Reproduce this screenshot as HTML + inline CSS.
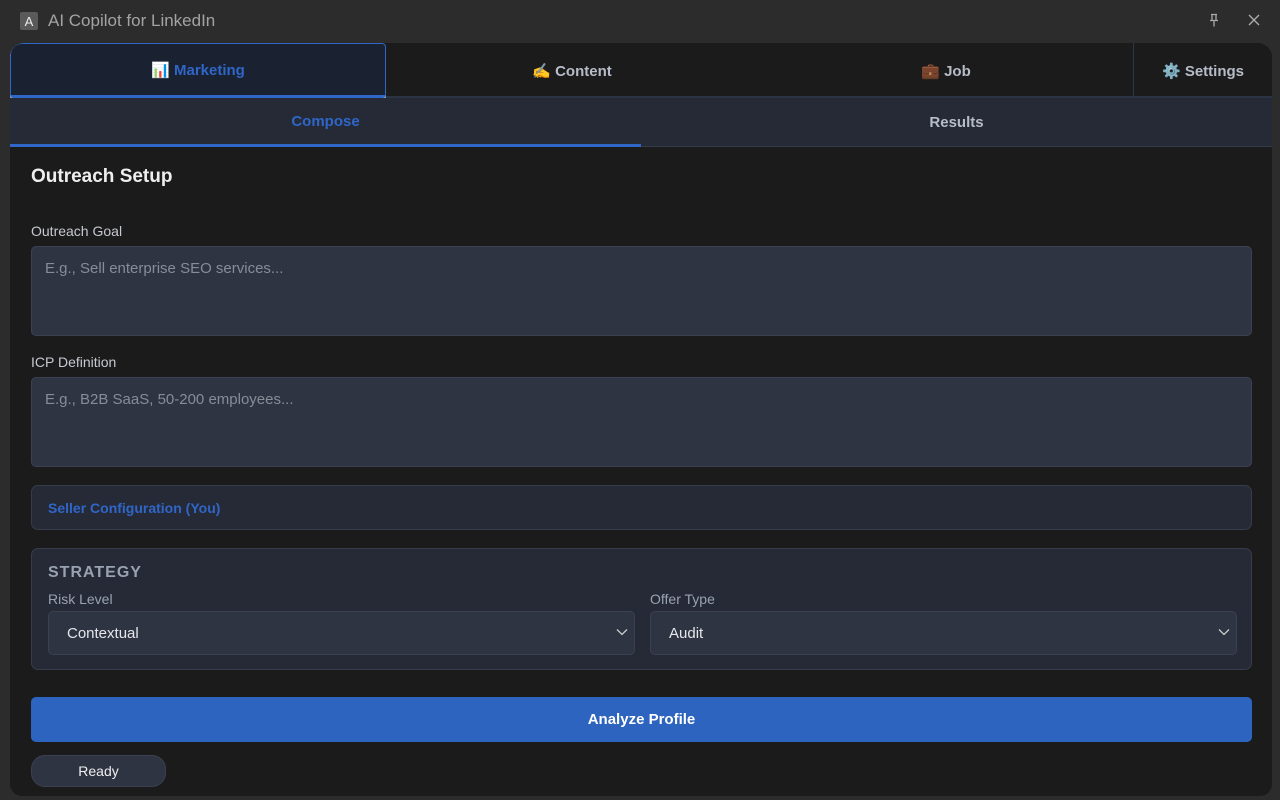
<!DOCTYPE html>
<html><head><style>
*{box-sizing:border-box;margin:0;padding:0}
body{width:1280px;height:800px;background:#2c2c2c;font-family:"Liberation Sans",sans-serif;position:relative;overflow:hidden;color:#e5e7eb}
.title{position:absolute;left:20px;top:11px;display:flex;align-items:center;gap:10px;color:#a3a3a3;font-size:17px}
.logo{width:18px;height:18px;background:#5a5a5a;color:#eee;font-size:13px;display:flex;align-items:center;justify-content:center;border-radius:2px}
.panel{position:absolute;left:10px;top:43px;width:1262px;height:753px;background:#1b1b1b;border-radius:14px 14px 12px 12px;overflow:hidden}
.tabs{position:absolute;left:0;top:0;width:1262px;height:55px;border-bottom:2px solid #2b3445}
.tab{position:absolute;top:0;height:55px;display:flex;align-items:center;justify-content:center;font-weight:bold;font-size:15px;color:#b6bcc8}
.tab.act{left:0;width:376px;background:#1a2130;border:1px solid #2f66c8;border-bottom:3px solid #2f66c8;border-radius:12px 4px 3px 3px;color:#2f66c8;box-shadow:0 1px 0 #ddd}
.sub{position:absolute;left:0;top:55px;width:1262px;height:49px;background:#252a36;border-bottom:1px solid #343c4c}
.sub div{position:absolute;top:0;height:49px;display:flex;align-items:center;justify-content:center;width:631px;font-weight:bold;font-size:15px}
h2{position:absolute;left:21px;top:123px;font-size:19px;color:#eee}
label{position:absolute;font-size:14px;color:#c6c9d0}
.ta{position:absolute;left:21px;width:1221px;height:90px;background:#2f3443;border:1px solid #3b4152;border-radius:5px;color:#878c97;font-size:15px;padding:13px 13px}
.box{position:absolute;left:21px;width:1221px;background:#252a36;border:1px solid #353c4b;border-radius:7px}
.sel{position:absolute;top:62px;width:587px;height:44px;background:#2f3443;border:1px solid #3b4152;border-radius:5px;color:#e5e7eb;font-size:15px;padding:13px 18px}
.sel svg{position:absolute;right:6px;top:16px}
</style></head><body>
<div class="title"><div class="logo">A</div>AI Copilot for LinkedIn</div>
<svg style="position:absolute;left:1207px;top:13px" width="14" height="14" viewBox="0 0 14 14" fill="none" stroke="#aaa" stroke-width="1.3"><path d="M4 1.5h6M5 1.5v6M9 1.5v6M3 7.5h8M7 7.5v6"/></svg>
<svg style="position:absolute;left:1247px;top:13px" width="14" height="14" viewBox="0 0 14 14" stroke="#aaa" stroke-width="1.4"><path d="M2 2l10 10M12 2L2 12"/></svg>
<div class="panel">
<div class="tabs">
<div class="tab act">📊&nbsp;Marketing</div>
<div class="tab" style="left:376px;width:372px">✍️&nbsp;Content</div>
<div class="tab" style="left:748px;width:376px">💼&nbsp;Job</div>
<div class="tab" style="left:1123px;width:139px;border-left:1px solid #2f3646">⚙️&nbsp;Settings</div>
</div>
<div class="sub"><div style="left:0;color:#2f66c8;border-bottom:3px solid #2f66c8">Compose</div><div style="left:631px;color:#b6bcc8">Results</div></div>
<h2>Outreach Setup</h2>
<label style="left:21px;top:180px">Outreach Goal</label>
<div class="ta" style="top:203px">E.g., Sell enterprise SEO services...</div>
<label style="left:21px;top:311px">ICP Definition</label>
<div class="ta" style="top:334px">E.g., B2B SaaS, 50-200 employees...</div>
<div class="box" style="top:442px;height:45px;padding:14px 16px;color:#2f66c8;font-weight:bold;font-size:14px">Seller Configuration (You)</div>
<div class="box" style="top:505px;height:122px">
<div style="position:absolute;left:16px;top:15px;font-weight:bold;font-size:16px;color:#9aa2b1;letter-spacing:1px">STRATEGY</div>
<label style="left:16px;top:42px;color:#9aa2b1">Risk Level</label>
<label style="left:618px;top:42px;color:#9aa2b1">Offer Type</label>
<div class="sel" style="left:16px">Contextual<svg width="12" height="8" viewBox="0 0 12 8" fill="none" stroke="#ccc" stroke-width="1.3"><path d="M1 1.5l5 5 5-5"/></svg></div>
<div class="sel" style="left:618px">Audit<svg width="12" height="8" viewBox="0 0 12 8" fill="none" stroke="#ccc" stroke-width="1.3"><path d="M1 1.5l5 5 5-5"/></svg></div>
</div>
<div style="position:absolute;left:21px;top:654px;width:1221px;height:45px;background:#2d64c0;border-radius:5px;display:flex;align-items:center;justify-content:center;font-weight:bold;font-size:15px;color:#fff">Analyze Profile</div>
<div style="position:absolute;left:21px;top:712px;width:135px;height:32px;background:#2f3443;border:1px solid #3b4152;border-radius:14px;display:flex;align-items:center;justify-content:center;font-size:14px;color:#eee">Ready</div>
</div>
</body></html>
